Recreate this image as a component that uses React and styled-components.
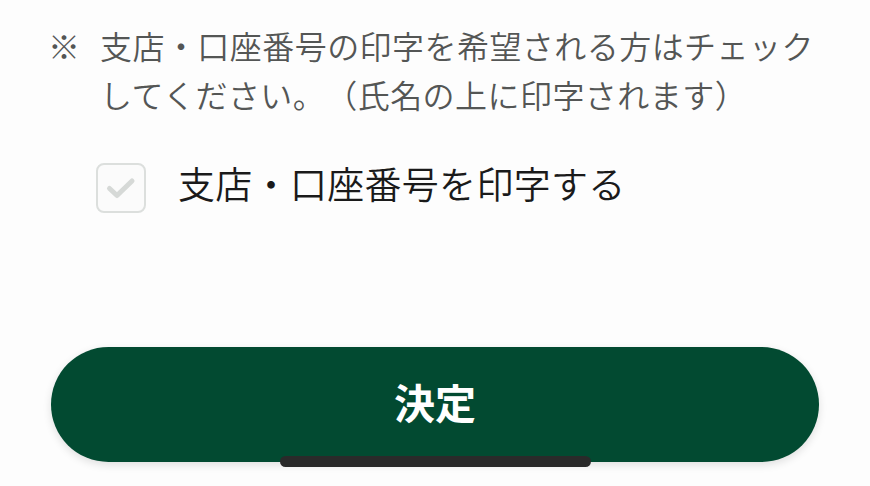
import React from "react";
import styled, { createGlobalStyle } from "styled-components";

const Global = createGlobalStyle`
  html, body { margin: 0; padding: 0; background: #fdfdfd; }
  body { font-family: "Noto Sans CJK JP", "Noto Sans", sans-serif; }
  * { box-sizing: border-box; }
`;

const Screen = styled.div`
  position: relative;
  width: 870px;
  height: 486px;
  overflow: hidden;
  background: #fdfdfd;
  display: flex;
  flex-direction: column;
  padding: 21px 51px 0 48px;
  text-spacing-trim: space-all;
`;

const Note = styled.div`
  display: grid;
  grid-template-columns: 52px 1fr;
  font-size: 32px;
  font-weight: 350;
  line-height: 49px;
  color: #545655;
  letter-spacing: 0.45px;
`;

const Mark = styled.span`
  display: block;
`;

const NoteText = styled.p`
  margin: 0;
  text-spacing-trim: space-all;
`;

const CheckRow = styled.label`
  display: flex;
  align-items: center;
  gap: 32px;
  margin: 44px 0 0 48px;
  cursor: pointer;
`;

const Box = styled.span`
  width: 50px;
  height: 50px;
  border: 2px solid #dcdfdd;
  border-radius: 8px;
  background: #fbfbfb;
  display: flex;
  align-items: center;
  justify-content: center;
  flex: none;
`;

const Label = styled.span`
  font-size: 37px;
  font-weight: 350;
  line-height: 50px;
  letter-spacing: 0.3px;
  color: #1a1a1a;
  margin-top: -10px;
`;

const Button = styled.button`
  margin: 134px 0 0 3px;
  width: 768px;
  height: 115px;
  border: none;
  border-radius: 58px;
  background: #024a31;
  color: #ffffff;
  font-family: "Noto Sans CJK JP", "Noto Sans", sans-serif;
  font-size: 41px;
  font-weight: 700;
  box-shadow: 0 3px 8px rgba(0, 0, 0, 0.12);
  display: flex;
  align-items: center;
  justify-content: center;
  padding: 0 0 8px;
`;

const HomeIndicator = styled.div`
  position: absolute;
  left: 280px;
  top: 456px;
  width: 311px;
  height: 11px;
  border-radius: 6px;
  background: #2a2a2a;
`;

export default function App() {
  return (
    <>
      <Global />
      <Screen>
        <Note>
          <Mark>※</Mark>
          <NoteText>
            支店・口座番号の印字を希望される方はチェックしてください。（氏名の上に印字されます）
          </NoteText>
        </Note>
        <CheckRow>
          <Box>
            <svg width="32" height="26" viewBox="0 0 32 26" fill="none">
              <path
                d="M4.5 13.5 L12 20.5 L27 6"
                stroke="#d6d9d7"
                strokeWidth="5"
                strokeLinecap="round"
                strokeLinejoin="round"
              />
            </svg>
          </Box>
          <Label>支店・口座番号を印字する</Label>
        </CheckRow>
        <Button>決定</Button>
        <HomeIndicator />
      </Screen>
    </>
  );
}
